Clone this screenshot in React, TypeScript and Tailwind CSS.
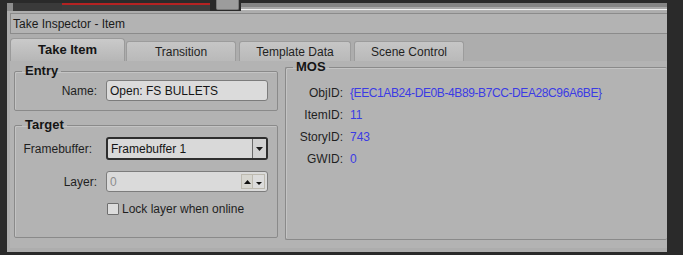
import React from "react";

const Label = ({ text, className = "pr-[9px]" }: { text: string; className?: string }) => (
  <div className={`w-[91px] shrink-0 text-right ${className}`}>{text}</div>
);

const MosRow = ({ label, value, tight }: { label: string; value: string; tight?: boolean }) => (
  <div className="flex items-center h-[22px]">
    <div className="w-[57px] shrink-0 text-right">{label}</div>
    <div className={`pl-[7px] text-[#3b3be4] ${tight ? "tracking-[-0.4px]" : ""}`}>{value}</div>
  </div>
);

const TopStrip = () => (
  <div className="h-[11px] flex shrink-0">
    <div className="w-[6px] mt-[3px] bg-[#8d8d8d]" />
    <div className="w-[49px] mt-[3px] bg-[#3a3a3a]" />
    <div className="w-[148px] flex flex-col">
      <div className="h-[3px]" />
      <div className="h-[2px] bg-[#b42222]" />
      <div className="flex-1 bg-[#3c3c3c]" />
    </div>
    <div className="w-[6px]" />
    <div className="w-[23px] h-[10px] bg-[#9c9c9c] border border-[#7a7a7a] border-t-0 rounded-b-[2px]" />
    <div className="flex-1 flex flex-col ml-[2px]">
      <div className="h-[3px]" />
      <div className="h-[4px] bg-[#858585]" />
      <div className="h-[2px] bg-[#a9a9a9]" />
      <div className="h-[1px] bg-[#f2f2f2]" />
      <div className="flex-1 bg-[#b0b0b0]" />
    </div>
  </div>
);

export default function App() {
  return (
    <div className="w-[683px] h-[255px] bg-[#2a2a2a] flex overflow-hidden font-['Liberation_Sans',Arial,sans-serif] text-[12px] leading-[14px] text-[#1f1f1f]">
      <div className="w-[7px] shrink-0" />
      <div className="w-[660px] flex flex-col">
        <TopStrip />
        <div className="h-[241px] bg-[#adadad] flex flex-col pl-[3px]">
          {/* title bar */}
          <div className="mt-[2px] h-[21px] border border-r-0 border-[#8b8b8b] bg-[#b3b3b3] flex items-center pl-[2px] text-[#1a1a1a]">
            Take Inspector - Item
          </div>

          {/* tabs */}
          <div className="mt-[4px] h-[23px] flex items-end">
            <div className="w-[115px] h-[23px] rounded-t-[4px] border border-b-0 border-[#9a9a9a] bg-gradient-to-b from-[#cacaca] to-[#b6b6b6] flex items-center justify-center font-bold text-[13px] text-[#151515]">
              Take Item
            </div>
            <div className="ml-[1px] w-[110px] h-[20px] rounded-t-[3px] border border-b-0 border-[#9c9c9c] bg-gradient-to-b from-[#c6c6c6] to-[#b9b9b9] flex items-center justify-center">
              Transition
            </div>
            <div className="ml-[3px] w-[112px] h-[20px] rounded-t-[3px] border border-b-0 border-[#9c9c9c] bg-gradient-to-b from-[#c6c6c6] to-[#b9b9b9] flex items-center justify-center">
              Template Data
            </div>
            <div className="ml-[3px] w-[110px] h-[20px] rounded-t-[3px] border border-b-0 border-[#9c9c9c] bg-gradient-to-b from-[#c6c6c6] to-[#b9b9b9] flex items-center justify-center">
              Scene Control
            </div>
          </div>

          {/* tab page */}
          <div className="h-[187px] bg-[#b3b3b3] flex pl-[4px] pt-[3px]">
            <div className="w-[264px] shrink-0 flex flex-col">
              <fieldset className="h-[47px] border border-[#8a8a8a] rounded-[2px] shadow-[inset_1px_1px_0_#c4c4c4]">
                <legend className="ml-[7px] px-[3px] font-bold text-[13px] leading-[14px] text-[#151515]">Entry</legend>
                <div className="flex items-center mt-[2px]">
                  <Label text="Name:" />
                  <div className="w-[162px] h-[21px] rounded-[3px] border border-[#7c7c7c] bg-[#dbdbdb] flex items-center pl-[3px] text-[#151515]">
                    Open: FS BULLETS
                  </div>
                </div>
              </fieldset>

              <fieldset className="mt-[7px] h-[120px] border border-[#8a8a8a] rounded-[2px] shadow-[inset_1px_1px_0_#c4c4c4]">
                <legend className="ml-[7px] px-[3px] font-bold text-[13px] leading-[14px] text-[#151515]">Target</legend>
                <div className="flex items-center mt-[5px]">
                  <Label text="Framebuffer:" className="pr-[14px]" />
                  <div className="w-[162px] h-[23px] rounded-[3px] border-2 border-[#2e2e2e] bg-[#d9d9d9] flex items-center">
                    <div className="flex-1 pl-[3px] text-[#151515]">Framebuffer 1</div>
                    <div className="w-[14px] h-full border-l border-[#6a6a6a] bg-[#d2d2d2] flex items-center justify-center">
                      <svg width="7" height="4" viewBox="0 0 7 4">
                        <path d="M0 0h7L3.5 4z" fill="#1a1a1a" />
                      </svg>
                    </div>
                  </div>
                </div>
                <div className="flex items-center mt-[11px]">
                  <Label text="Layer:" />
                  <div className="w-[162px] h-[21px] rounded-[3px] border border-[#7c7c7c] bg-[#dadada] flex items-center">
                    <div className="flex-1 pl-[3px] text-[#8c8c8c]">0</div>
                    <div className="flex h-[15px] mr-[2px]">
                      <div className="w-[12px] h-full border border-[#bdbab0] bg-[#d7d6d0] flex items-center justify-center">
                        <svg width="7" height="4" viewBox="0 0 7 4">
                          <path d="M0 4h7L3.5 0z" fill="#111" />
                        </svg>
                      </div>
                      <div className="w-[12px] h-full border border-l-0 border-[#bdbab0] bg-[#dcdcdc] flex items-end justify-center pb-[3px]">
                        <svg width="6" height="3" viewBox="0 0 6 3">
                          <path d="M0 0h6L3 3z" fill="#111" />
                        </svg>
                      </div>
                    </div>
                  </div>
                </div>
                <div className="flex items-center mt-[10px] ml-[92px]">
                  <div className="w-[12px] h-[12px] border border-[#6e6e6e] bg-[#dcdcdc] rounded-[1px]" />
                  <div className="ml-[3px]">Lock layer when online</div>
                </div>
              </fieldset>
            </div>

            <fieldset className="ml-[7px] -mt-[4px] w-[400px] h-[180px] border border-r-0 border-[#8a8a8a] rounded-[2px] shadow-[inset_1px_1px_0_#c4c4c4]">
              <legend className="ml-[7px] px-[3px] font-bold text-[13px] leading-[14px] text-[#151515]">MOS</legend>
              <div className="flex flex-col mt-[8px]">
                <MosRow label="ObjID:" value="{EEC1AB24-DE0B-4B89-B7CC-DEA28C96A6BE}" tight />
                <MosRow label="ItemID:" value="11" />
                <MosRow label="StoryID:" value="743" />
                <MosRow label="GWID:" value="0" />
              </div>
            </fieldset>
          </div>
        </div>
      </div>
    </div>
  );
}
